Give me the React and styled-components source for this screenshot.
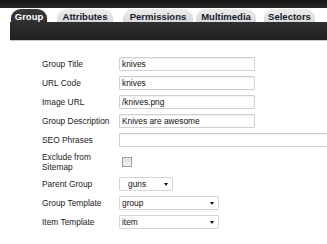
import React from 'react'
import styled, { createGlobalStyle } from 'styled-components'

const Global = createGlobalStyle`
  body {
    margin: 0;
    background: #fff;
    font-family: "Liberation Sans", Arial, sans-serif;
    overflow: hidden;
  }
`

const Page = styled.div`
  width: 327px;
  height: 244px;
  overflow: hidden;
`

const TopBand = styled.div`
  height: 8px;
  background: linear-gradient(#161616, #262626);
`

const TabRow = styled.div`
  display: flex;
  align-items: flex-end;
  height: 14px;
  padding-left: 11px;
`

const Tab = styled.div`
  width: ${p => p.w}px;
  margin-left: ${p => p.gap || 0}px;
  height: 13px;
  border-radius: 10px 10px 0 0 / 9px 9px 0 0;
  display: flex;
  align-items: center;
  justify-content: center;
  font-size: 9.5px;
  font-weight: bold;
  padding-top: 1px;
  box-sizing: border-box;
  color: ${p => (p.active ? '#fff' : '#141c2c')};
  background: ${p => (p.active ? 'linear-gradient(#3a3a3a, #2f2f2f)' : 'linear-gradient(#ececec, #dadada)')};
`

const Bar = styled.div`
  margin-left: 10px;
  height: 18px;
  background: linear-gradient(#2f2f2f, #1f1f1f);
  border-bottom: 1px solid #c9c9c9;
`

const Form = styled.div`
  display: grid;
  grid-template-columns: 77px 1fr;
  row-gap: 5px;
  padding: 16px 0 0 42px;
  align-items: center;
`

const Label = styled.div`
  font-size: 8.4px;
  line-height: 10px;
  color: #222;
`

const Input = styled.div`
  width: ${p => p.w || 136}px;
  height: 14px;
  box-sizing: border-box;
  border: 1px solid #cdd0d4;
  border-radius: 1px;
  box-shadow: inset 0 1px 1px #eef0f2;
  font-size: 8.4px;
  line-height: 12px;
  padding-left: 2px;
  color: #111;
  white-space: nowrap;
  overflow: hidden;
`

const Select = styled.div`
  position: relative;
  width: ${p => p.w}px;
  height: 14px;
  box-sizing: border-box;
  border: 1px solid #d4d6d9;
  border-radius: 1px;
  font-size: 8.4px;
  line-height: 12px;
  padding-left: ${p => p.indent || 2}px;
  color: #111;
`

const Arrow = styled.span`
  position: absolute;
  right: 4px;
  top: 5px;
  width: 0;
  height: 0;
  border-left: 2.5px solid transparent;
  border-right: 2.5px solid transparent;
  border-top: 3px solid #111;
`

const CheckCell = styled.div`
  padding-left: 3px;
`

const Check = styled.div`
  width: 10px;
  height: 10px;
  box-sizing: border-box;
  border: 1px solid #9a9a9a;
  background: linear-gradient(#dcdcdc, #f4f4f4);
  box-shadow: inset 0 0 0 1px #ececec;
`

const tabs = [
  { name: 'Group', w: 36, gap: 0, active: true },
  { name: 'Attributes', w: 56, gap: 10 },
  { name: 'Permissions', w: 70, gap: 10 },
  { name: 'Multimedia', w: 60, gap: 3 },
  { name: 'Selectors', w: 51, gap: 8 },
]

export default function App() {
  return (
    <Page>
      <Global />
      <TopBand />
      <TabRow>
        {tabs.map(t => (
          <Tab key={t.name} w={t.w} gap={t.gap} active={t.active}>{t.name}</Tab>
        ))}
      </TabRow>
      <Bar />
      <Form>
        <Label>Group Title</Label>
        <Input>knives</Input>
        <Label>URL Code</Label>
        <Input>knives</Input>
        <Label>Image URL</Label>
        <Input>/knives.png</Input>
        <Label>Group Description</Label>
        <Input>Knives are awesome</Input>
        <Label>SEO Phrases</Label>
        <Input w={230}></Input>
        <Label>Exclude from<br />Sitemap</Label>
        <CheckCell><Check /></CheckCell>
        <Label>Parent Group</Label>
        <Select w={54} indent={8}>guns<Arrow /></Select>
        <Label>Group Template</Label>
        <Select w={100}>group<Arrow /></Select>
        <Label>Item Template</Label>
        <Select w={100}>item<Arrow /></Select>
      </Form>
    </Page>
  )
}
